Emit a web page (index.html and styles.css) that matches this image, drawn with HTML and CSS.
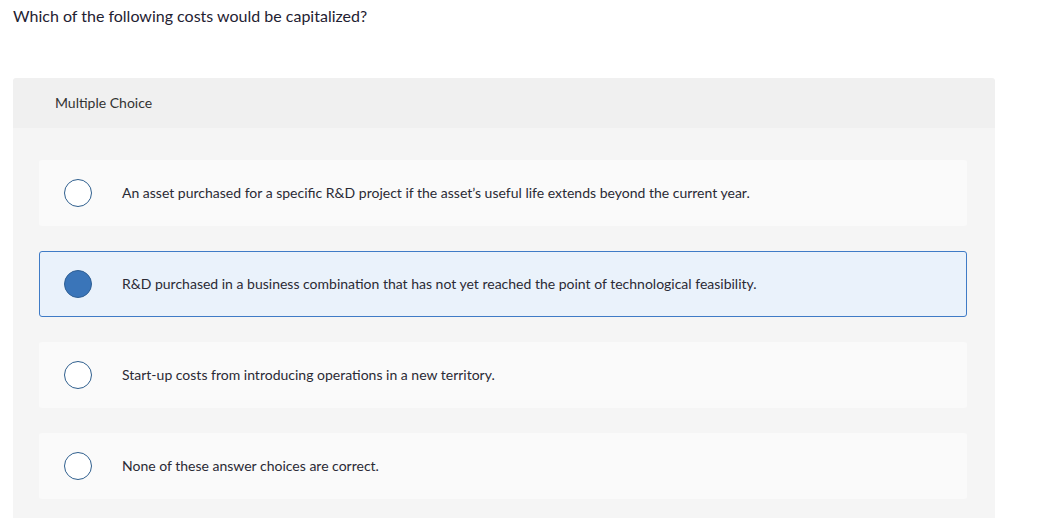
FILE: index.html
```html
<!DOCTYPE html>
<html>
<head>
<meta charset="utf-8">
<link rel="stylesheet" href="styles.css">
</head>
<body>
<div class="page">
  <p class="question">Which of the following costs would be capitalized?</p>
  <section class="panel">
    <div class="panel-head">Multiple Choice</div>
    <div class="panel-body">
      <div class="option">
        <span class="radio"></span>
        <span class="label">An asset purchased for a specific R&amp;D project if the asset’s useful life extends beyond the current year.</span>
      </div>
      <div class="option selected">
        <span class="radio"></span>
        <span class="label">R&amp;D purchased in a business combination that has not yet reached the point of technological feasibility.</span>
      </div>
      <div class="option">
        <span class="radio"></span>
        <span class="label">Start-up costs from introducing operations in a new territory.</span>
      </div>
      <div class="option">
        <span class="radio"></span>
        <span class="label">None of these answer choices are correct.</span>
      </div>
    </div>
  </section>
</div>
</body>
</html>
```

FILE: styles.css
```css
html, body {
  margin: 0;
  padding: 0;
  background: #ffffff;
}
body {
  font-family: Lato, "Open Sans", Arial, sans-serif;
  color: #222;
}
.page {
  padding: 0 42px 0 13px;
}
.question {
  margin: 0;
  padding-top: 7px;
  font-size: 16px;
  line-height: 18px;
  color: #1f2232;
}
.panel {
  margin-top: 53px;
  width: 982px;
  border-radius: 3px 3px 0 0;
  overflow: hidden;
}
.panel-head {
  background: #f0f0f0;
  height: 50px;
  display: flex;
  align-items: center;
  padding-left: 42px;
  padding-bottom: 1px;
  box-sizing: border-box;
  font-size: 14px;
  color: #333;
}
.panel-body {
  background: #f5f5f5;
  padding: 32px 28px 20px 26px;
  display: flex;
  flex-direction: column;
  gap: 25px;
}
.option {
  background: #fafafa;
  height: 66px;
  border-radius: 3px;
  border: 1px solid transparent;
  box-sizing: border-box;
  display: flex;
  align-items: center;
  padding-left: 24px;
}
.option.selected {
  background: #eaf2fb;
  border-color: #3f7bc6;
}
.radio {
  width: 28px;
  height: 28px;
  box-sizing: border-box;
  border-radius: 50%;
  border: 1.5px solid #2f5f8e;
  background: #fff;
  flex: none;
}
.option.selected .radio {
  background: #3a75b9;
  border-color: #2f5f94;
}
.label {
  margin-left: 30px;
  padding-bottom: 2px;
  font-size: 14px;
  color: #2a2a35;
}
```
